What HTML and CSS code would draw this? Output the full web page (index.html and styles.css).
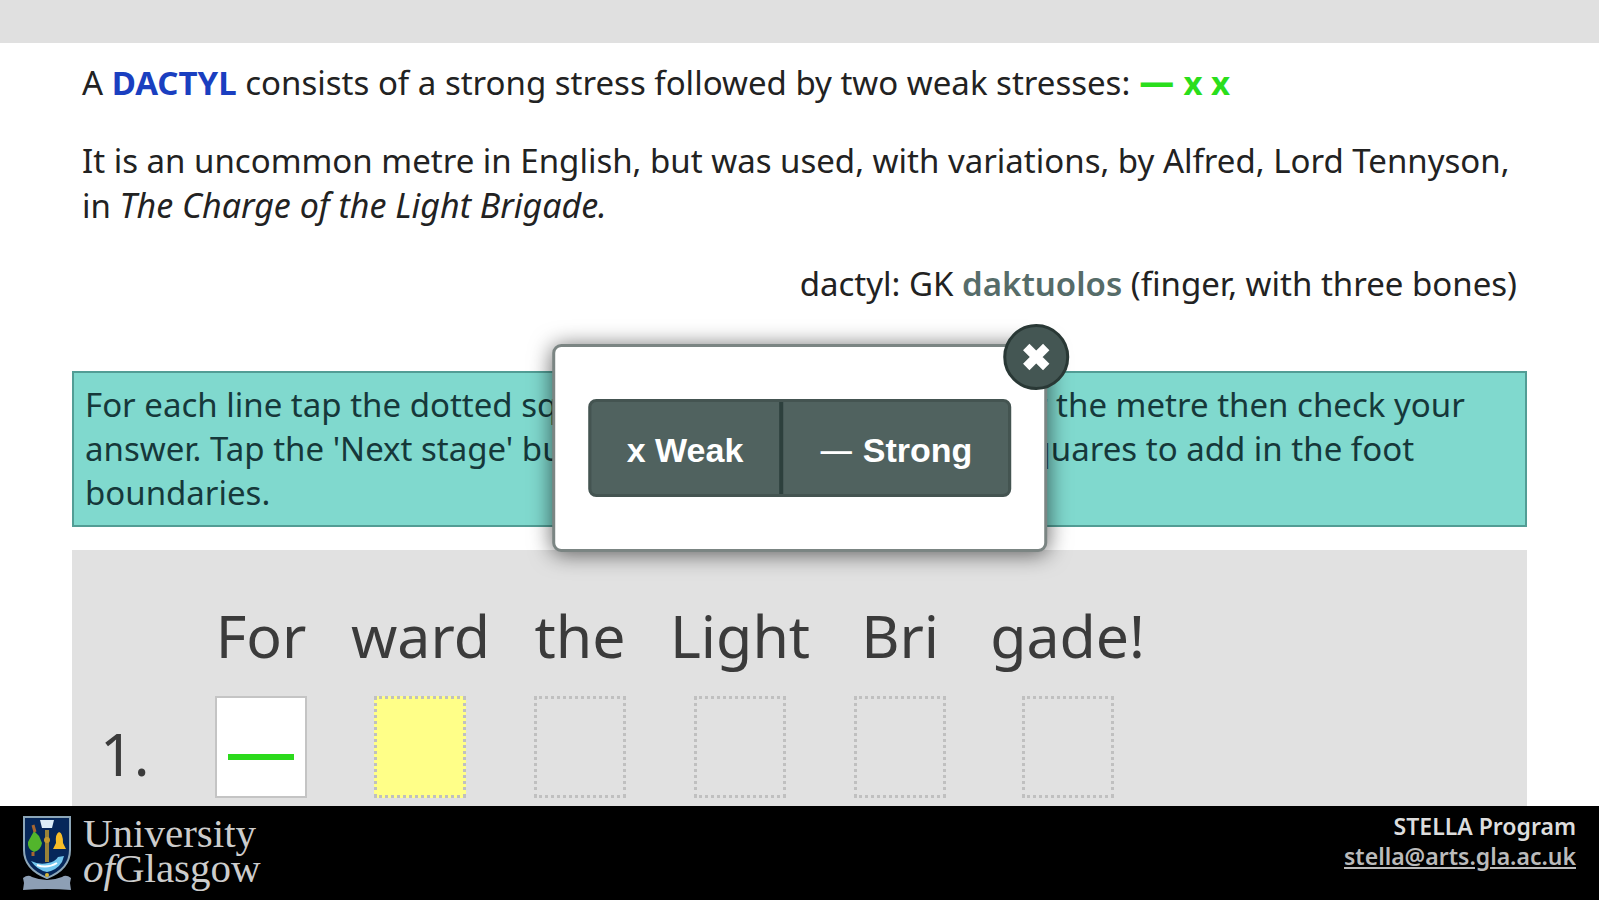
FILE: index.html
```html
<!DOCTYPE html>
<html lang="en">
<head>
    <meta charset="utf-8">
    <title>Dactyl</title>
    <link rel="stylesheet" href="styles.css">
</head>
<body>
    <header class="topbar"></header>

    <main class="content">
        <div class="intro">
            <p>A <strong class="term">DACTYL</strong> consists of a strong stress followed by two weak stresses: <strong class="pattern"><span class="dash">—</span> x x</strong></p>
            <p>It is an uncommon metre in English, but was used, with variations, by Alfred, Lord Tennyson, in <em>The Charge of the Light Brigade.</em></p>
            <p class="origin">dactyl: GK <strong>daktuolos</strong> (finger, with three bones)</p>
        </div>

        <p class="instructions">For each line tap the dotted squares and mark the stresses for the metre then check your answer. Tap the 'Next stage' button then touch between the squares to add in the foot boundaries.</p>

        <section class="exercise">
            <span class="number">1.</span>
            <div class="syllables">
                <div class="syllable"><label for="s1">For</label><button class="square strong" id="s1"><span class="mark"></span></button></div>
                <div class="syllable"><label for="s2">ward</label><button class="square active" id="s2"></button></div>
                <div class="syllable"><label for="s3">the</label><button class="square" id="s3"></button></div>
                <div class="syllable"><label for="s4">Light</label><button class="square" id="s4"></button></div>
                <div class="syllable"><label for="s5">Bri</label><button class="square" id="s5"></button></div>
                <div class="syllable"><label for="s6">gade!</label><button class="square" id="s6"></button></div>
            </div>
        </section>
    </main>

    <div class="popup" role="dialog" aria-label="Stress">
        <button class="close" aria-label="Close">
            <svg viewBox="0 0 32 32" width="32" height="32">
                <path d="M6 6L26 26M26 6L6 26" stroke="#fff" stroke-width="9"/>
            </svg>
        </button>
        <div class="choices">
            <button>x Weak</button>
            <button><span class="dash">—</span> Strong</button>
        </div>
    </div>

    <footer class="footer">
        <a class="logo" href="#">
            <svg class="crest" viewBox="0 0 48 76" width="48" height="76">
                <path d="M0 62Q5 58 9 61Q24 67 39 61Q43 58 48 62L47 67L48 74Q24 72 0 74L1 67Z" fill="#8d9fb5"/>
                <path d="M1 1H47V34Q47 53 24 62Q1 53 1 34Z" fill="#06275a" stroke="#8ca6b8" stroke-width="2"/>
                <path d="M17 4H31L29 12H19Z" fill="#dcecf7"/>
                <path d="M22 14H26V46H22Z" fill="#9a8238"/>
                <circle cx="24" cy="24" r="3" fill="#c59a2f"/>
                <path d="M11 15L16 20L19 27Q18 34 11 36Q4 33 5 26Z" fill="#52b52c"/>
                <path d="M10 36V40M10 9L12 16" stroke="#a76631" stroke-width="3"/>
                <path d="M36 16Q40 17 40 27L43 33H30L33 27Q32 18 36 16Z" fill="#f8bd27"/>
                <path d="M8 45Q16 49 25 47Q32 46 35 41L41 40L39 46Q34 54 24 56Q14 54 8 45Z" fill="#72c6ed"/>
                <path d="M14 49Q24 53 34 47" stroke="#fff" stroke-width="2" fill="none"/>
                <circle cx="24" cy="59" r="2" fill="#d7b637"/>
            </svg>
            <span class="logo-text">University<br><i>of</i>Glasgow</span>
        </a>
        <div class="contact">
            STELLA Program<br>
            <a href="mailto:stella@arts.gla.ac.uk">stella@arts.gla.ac.uk</a>
        </div>
    </footer>
</body>
</html>
```
FILE: styles.css
```css
*{
    box-sizing: border-box;
}
body{
    margin: 0;
    background-color: #fff;
    font-family: "Noto Sans", sans-serif;
    font-size: 33px;
    line-height: 44px;
    color: #222;
    overflow: hidden;
}
button{
    font: inherit;
    padding: 0;
}
.topbar{
    height: 43px;
    background-color: #e0e0e0;
}
.content{
    padding: 18px 72px 0;
}
.intro{
    padding: 0 10px;
}
.intro p{
    margin: 0 0 34px;
}
.intro em{
    font-size: 34px;
}
.term{
    font-weight: bold;
    color: #1a3fc0;
}
.pattern{
    color: #2ade1c;
}
.pattern .dash{
    font-family: "DejaVu Sans", sans-serif;
    font-size: 36px;
    line-height: 30px;
}
.intro .origin{
    text-align: right;
    margin-bottom: 65px;
}
.origin strong{
    font-weight: 600;
    color: #566c69;
}
.instructions{
    margin: 0 0 23px;
    padding: 10px 11px;
    background-color: #80d9ce;
    border: 2px solid #529d95;
    color: #16383a;
}
.exercise{
    display: flex;
    align-items: flex-end;
    padding: 46px 28px 103px;
    background-color: #e1e1e1;
    font-size: 59px;
    line-height: 78px;
    color: #3b3b3b;
}
.number{
    width: 92px;
    line-height: 90px;
}
.syllables{
    display: flex;
    gap: 21px;
}
.syllable{
    display: flex;
    flex-direction: column;
    align-items: center;
    gap: 22px;
    min-width: 138px;
}
.square{
    width: 92px;
    height: 102px;
    background: transparent;
    border: 3px dotted #c0c0c0;
}
.strong{
    background-color: #fff;
    border: 2px solid #c4c4c4;
}
.active{
    background-color: #ffff88;
}
.mark{
    display: block;
    width: 66px;
    height: 6px;
    margin: 20px auto 0;
    background-color: #2bda1c;
}
.popup{
    position: fixed;
    top: 344px;
    left: 50%;
    transform: translateX(-50%);
    padding: 52px 33px;
    background-color: #fff;
    border: 3px solid #7b8583;
    border-radius: 9px;
    box-shadow: 0 2px 22px rgba(0, 0, 0, 0.6);
}
.choices{
    display: flex;
    background-color: #445451;
    border: 3px solid #445451;
    border-radius: 8px;
    overflow: hidden;
}
.choices button{
    height: 92px;
    padding: 4px 36px 0;
    border: none;
    background-color: #50625f;
    color: #fff;
    font-family: "Liberation Sans", Arial, sans-serif;
    font-size: 34px;
    font-weight: bold;
}
.choices button + button{
    border-left: 4px solid #2d403d;
}
.choices .dash{
    font-family: "Noto Sans", sans-serif;
    font-weight: normal;
    line-height: 30px;
}
.close{
    position: absolute;
    top: -23px;
    right: -25px;
    display: flex;
    align-items: center;
    justify-content: center;
    width: 66px;
    height: 66px;
    background-color: #445653;
    border: 3px solid #293835;
    border-radius: 50%;
}
.footer{
    position: fixed;
    left: 0;
    right: 0;
    bottom: 0;
    display: flex;
    justify-content: space-between;
    height: 94px;
    padding: 5px 23px 0;
    background-color: #000;
    color: #ddd;
}
.logo{
    display: flex;
    gap: 12px;
    padding-top: 5px;
    color: #ccc;
    text-decoration: none;
}
.logo-text{
    font-family: "Liberation Serif", serif;
    font-size: 41px;
    line-height: 35px;
}
.contact{
    font-size: 23px;
    font-weight: 600;
    line-height: 30px;
    text-align: right;
}
.contact a{
    color: #bbb;
}
```
